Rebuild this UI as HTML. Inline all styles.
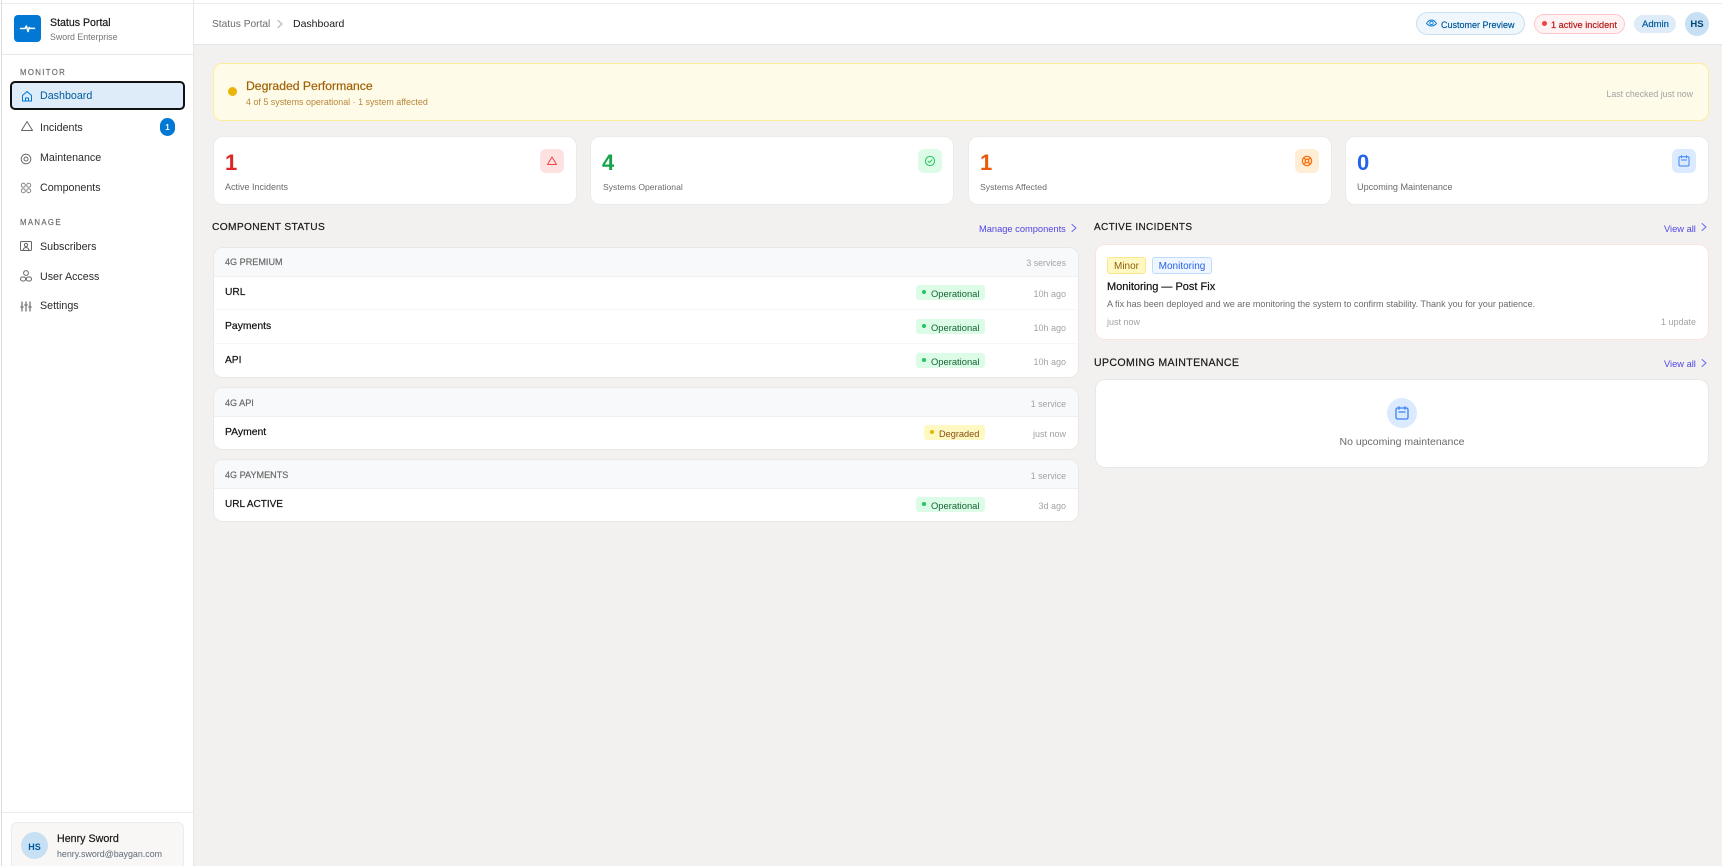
<!DOCTYPE html>
<html lang="en"><head><meta charset="utf-8"><title>Status Portal</title>
<style>
*{box-sizing:border-box;margin:0;padding:0}
html,body{width:1722px;height:866px;overflow:hidden;background:#f2f1ef;font-family:"Liberation Sans",Arial,sans-serif}
#p{position:relative;width:1722px;height:866px;overflow:hidden}
.b{position:absolute}
.t{position:absolute;line-height:0;height:0;white-space:nowrap;font-size:10.5px;color:#1f1f1f}
.r{transform:translateX(-100%)}
.c{transform:translateX(-50%)}
.m{-webkit-text-stroke:.2px currentColor}
.card{position:absolute;background:#fff;border:1px solid #ebebeb;border-radius:10px}
.ico{position:absolute;width:24px;height:24px;border-radius:6px;top:149px}
svg{position:absolute;fill:none;stroke-linecap:round;stroke-linejoin:round}
.g{position:absolute;left:212.5px;width:866px;background:#fff;border:1px solid #e8e8ea;border-radius:10px;overflow:hidden}
.gh{position:absolute;left:0;right:0;top:0;background:#f8f9fa;border-bottom:1px solid #f0f0f0}
.ln{position:absolute;left:213px;width:864px;height:1px;background:#f7f7f7}
.pill{position:absolute;height:15px;border-radius:3px}
.ok{background:#dcfce7;left:916px;width:69px}
.dot{position:absolute;border-radius:50%}
.okt{color:#166534;font-size:9.4px}
.tm{color:#a3a3a3;font-size:9px;left:1066px}
.ghl{color:#6b6b6b;font-size:9.1px;left:225px}
.nm{left:225px;font-size:10.2px;color:#111}
.lb{color:#6b6b6b;font-size:9px}
.nv{left:40px;font-size:10.7px;color:#2b2b2b}
.st{font-size:22px;font-weight:700}
.sec{font-size:10.2px;color:#1a1a1a;letter-spacing:.35px}
.lk{font-size:9.3px;color:#4f46e5}
</style></head><body><div id="p">

<!-- sidebar -->
<div class="b" style="left:0;top:0;width:194px;height:866px;background:#fff;border-right:1px solid #e8e8e8"></div>
<div class="b" style="left:194px;top:0;width:1528px;height:45px;background:#fff;border-bottom:1px solid #e6e6e6"></div>
<div class="b" style="left:1px;top:0;width:1px;height:866px;background:#dcdcdc"></div>
<div class="b" style="left:0;top:3px;width:1722px;height:1px;background:#ececec"></div>
<div class="b" style="left:2px;top:54px;width:191px;height:1px;background:#e8e8e8"></div>

<div class="b" style="left:14px;top:15px;width:27px;height:27px;background:#0078d4;border-radius:4px"></div>
<svg style="left:14px;top:15px" width="27" height="27" viewBox="0 0 27 27" stroke="#fff" stroke-width="1.5"><path d="M6.500 13.500h4.500l1.400-2.500 1.600 5.500 1.200-4 .8.900H20.500"/></svg>
<div class="t m" style="left:50px;top:23px;font-size:10.6px;color:#1a1a1a">Status Portal</div>
<div class="t" style="left:50px;top:37px;font-size:8.8px;color:#757575">Sword Enterprise</div>

<div class="t m" style="left:20px;top:73px;font-size:7.8px;letter-spacing:1.35px;color:#6f6f6f">MONITOR</div>
<div class="b" style="left:10px;top:81px;width:175px;height:29px;background:#deecf9;border:2px solid #111;border-radius:5px"></div>
<svg style="left:20px;top:89px" width="14" height="14" viewBox="0 0 14 14" stroke="#0078d4" stroke-width="1"><path d="M2.500 6.500 7 2.500l4.500 4v5.500h-9zM5.500 12V9h3v3"/></svg>
<div class="t nv" style="top:96px;color:#005a9e">Dashboard</div>

<svg style="left:20px;top:119px" width="14" height="14" viewBox="0 0 14 14" stroke="#666" stroke-width="1"><path d="M7 2.500 12.500 11.500H1.500z"/></svg>
<div class="t nv" style="top:128px">Incidents</div>
<div class="b" style="left:160px;top:118px;width:15px;height:18px;background:#0078d4;border-radius:8px"></div>
<div class="t c" style="left:167.500px;top:128px;font-size:8px;font-weight:700;color:#fff">1</div>

<svg style="left:19px;top:152px" width="14" height="14" viewBox="0 0 14 14" stroke="#666" stroke-width="1"><circle cx="7" cy="7" r="2"/><circle cx="7" cy="7" r="4.800" stroke-dasharray="2 .6"/></svg>
<div class="t nv" style="top:158px">Maintenance</div>

<svg style="left:19px;top:181px" width="14" height="14" viewBox="0 0 14 14" stroke="#888" stroke-width="1"><circle cx="4.300" cy="4.300" r="2"/><circle cx="9.700" cy="4.300" r="2"/><circle cx="4.300" cy="9.700" r="2"/><circle cx="9.700" cy="9.700" r="2"/></svg>
<div class="t nv" style="top:188px">Components</div>

<div class="t m" style="left:20px;top:223px;font-size:7.800px;letter-spacing:1.350px;color:#6f6f6f">MANAGE</div>

<svg style="left:19px;top:239px" width="14" height="14" viewBox="0 0 14 14" stroke="#666" stroke-width="1"><rect x="1.500" y="2.500" width="11" height="9" rx="1"/><circle cx="7" cy="6" r="1.600"/><path d="M4 11.500c.4-2 1.400-3 3-3s2.600 1 3 3"/></svg>
<div class="t nv" style="top:247px">Subscribers</div>

<svg style="left:19px;top:269px" width="14" height="14" viewBox="0 0 14 14" stroke="#666" stroke-width="1"><circle cx="7" cy="4" r="2.400"/><rect x="1.500" y="8" width="5.200" height="4" rx="2"/><rect x="7.300" y="8" width="5.200" height="4" rx="2"/></svg>
<div class="t nv" style="top:277px">User Access</div>

<svg style="left:19px;top:299px" width="14" height="14" viewBox="0 0 14 14" stroke="#777" stroke-width="1.300"><path d="M3 3v9M7 3v9M11 3v9M1.800 8h2.400M5.800 6h2.400M9.800 8h2.400"/></svg>
<div class="t nv" style="top:306px">Settings</div>

<div class="b" style="left:2px;top:812px;width:191px;height:1px;background:#ececec"></div>
<div class="b" style="left:11px;top:822px;width:173px;height:60px;background:#f8f7f5;border:1px solid #ececec;border-radius:6px"></div>
<div class="dot" style="left:21px;top:832px;width:27px;height:27px;background:#c7e0f4"></div>
<div class="t c" style="left:34.500px;top:847px;font-size:9px;font-weight:700;color:#005a9e">HS</div>
<div class="t m" style="left:57px;top:839px;font-size:10.700px;color:#1a1a1a">Henry Sword</div>
<div class="t" style="left:57px;top:854px;font-size:8.900px;color:#5f6b7a">henry.sword@baygan.com</div>

<!-- top bar -->
<div class="t" style="left:212px;top:25px;font-size:10.200px;color:#6b6b6b">Status Portal</div>
<svg style="left:275px;top:19px" width="10" height="10" viewBox="0 0 10 10" stroke="#aaa" stroke-width="1"><path d="M3 1.500 7 5 3 8.500"/></svg>
<div class="t" style="left:293px;top:24px;font-size:10.500px;color:#1a1a1a">Dashboard</div>

<div class="b" style="left:1416px;top:12px;width:109px;height:23px;background:#eff6fc;border:1px solid #c7e0f4;border-radius:12px"></div>
<svg style="left:1425px;top:17px" width="13" height="13" viewBox="0 0 13 13" stroke="#0078d4" stroke-width=".9"><path d="M1.500 6.500C3 4 4.600 3 6.500 3s3.500 1 5 3.500c-1.500 1.500-3 2.500-5 2.500s-3.500-1-5-2.500z"/><circle cx="6.500" cy="6" r="1.700"/></svg>
<div class="t m" style="left:1441px;top:25px;font-size:9px;color:#005a9e">Customer Preview</div>

<div class="b" style="left:1534px;top:14px;width:91px;height:20px;background:#fef2f2;border:1px solid #fecaca;border-radius:10px"></div>
<div class="dot" style="left:1542px;top:21px;width:5px;height:5px;background:#ef4444"></div>
<div class="t m" style="left:1551px;top:25px;font-size:9.200px;color:#b91c1c">1 active incident</div>

<div class="b" style="left:1634px;top:15px;width:42px;height:18px;background:#deecf9;border-radius:9px"></div>
<div class="t m" style="left:1642px;top:25px;font-size:9.500px;color:#005a9e">Admin</div>
<div class="dot" style="left:1685px;top:12px;width:24px;height:24px;background:#c7e0f4"></div>
<div class="t c" style="left:1697px;top:25px;font-size:9.500px;font-weight:700;color:#004578">HS</div>

<!-- banner -->
<div class="b" style="left:212.500px;top:63px;width:1496px;height:58px;background:#fefbe8;border:1px solid #fdee9b;border-radius:9px"></div>
<div class="dot" style="left:228px;top:87px;width:9px;height:9px;background:#eab308"></div>
<div class="t m" style="left:246px;top:86px;font-size:12.200px;color:#a16207">Degraded Performance</div>
<div class="t" style="left:246px;top:102px;font-size:8.930px;color:#b8863c">4 of 5 systems operational · 1 system affected</div>
<div class="t r" style="left:1693px;top:94px;font-size:8.800px;color:#a3a3a3">Last checked just now</div>

<!-- stats -->
<div class="card" style="left:212.500px;top:136px;width:364.500px;height:69px"></div>
<div class="card" style="left:589.500px;top:136px;width:364.500px;height:69px"></div>
<div class="card" style="left:967.500px;top:136px;width:364.500px;height:69px"></div>
<div class="card" style="left:1344.500px;top:136px;width:364px;height:69px"></div>
<div class="t st" style="left:225px;top:163px;color:#dc2626">1</div>
<div class="t st" style="left:602px;top:163px;color:#16a34a">4</div>
<div class="t st" style="left:980px;top:163px;color:#ea580c">1</div>
<div class="t st" style="left:1357px;top:163px;color:#2563eb">0</div>
<div class="t lb" style="left:225px;top:187px">Active Incidents</div>
<div class="t lb" style="left:603px;top:187px;font-size:8.600px">Systems Operational</div>
<div class="t lb" style="left:980px;top:187px;font-size:8.700px">Systems Affected</div>
<div class="t lb" style="left:1357px;top:187px;font-size:9.100px">Upcoming Maintenance</div>

<div class="ico" style="left:540px;background:#fee2e2"></div>
<svg style="left:545px;top:154px" width="14" height="14" viewBox="0 0 14 14" stroke="#ef4444" stroke-width="1"><path d="M7 3 11.500 10.500H2.500z"/></svg>
<div class="ico" style="left:918px;background:#dcfce7"></div>
<svg style="left:923px;top:154px" width="14" height="14" viewBox="0 0 14 14" stroke="#22c55e" stroke-width="1"><circle cx="7" cy="7" r="4.600"/><path d="M5 7.200 6.500 8.500 9 5.800"/></svg>
<div class="ico" style="left:1295px;background:#ffedd5"></div>
<svg style="left:1300px;top:154px" width="14" height="14" viewBox="0 0 14 14" stroke="#f97316" stroke-width="1.300"><circle cx="7" cy="7" r="4.600"/><circle cx="7" cy="7" r="1.800"/><path d="M3.800 3.800 5.700 5.700M10.200 3.800 8.300 5.700M3.800 10.200 5.700 8.300M10.200 10.200 8.300 8.300"/></svg>
<div class="ico" style="left:1672px;background:#dbeafe"></div>
<svg style="left:1677px;top:154px" width="14" height="14" viewBox="0 0 14 14" stroke="#3b82f6" stroke-width="1"><rect x="2" y="2.800" width="10" height="9.200" rx="1.200"/><path d="M4.500 1.800v2M9.500 1.800v2M4.500 6h5"/></svg>

<!-- section titles -->
<div class="t sec m" style="left:212px;top:228px">COMPONENT STATUS</div>
<div class="t lk" style="left:979px;top:229px">Manage components</div>
<svg style="left:1069px;top:223px" width="10" height="10" viewBox="0 0 10 10" stroke="#6366f1" stroke-width="1"><path d="M3 1.500 7 5 3 8.500"/></svg>
<div class="t sec m" style="left:1094px;top:228px;font-size:10px">ACTIVE INCIDENTS</div>
<div class="t lk" style="left:1664px;top:229px">View all</div>
<svg style="left:1699px;top:222px" width="10" height="10" viewBox="0 0 10 10" stroke="#6366f1" stroke-width="1"><path d="M3 1.500 7 5 3 8.500"/></svg>
<div class="t sec m" style="left:1094px;top:363px;font-size:10.600px">UPCOMING MAINTENANCE</div>
<div class="t lk" style="left:1664px;top:364px">View all</div>
<svg style="left:1699px;top:358px" width="10" height="10" viewBox="0 0 10 10" stroke="#6366f1" stroke-width="1"><path d="M3 1.500 7 5 3 8.500"/></svg>

<!-- groups -->
<div class="g" style="top:247px;height:131px"><div class="gh" style="height:29px"></div></div>
<div class="ln" style="top:309px"></div><div class="ln" style="top:343px"></div>
<div class="g" style="top:387px;height:63px"><div class="gh" style="height:29px"></div></div>
<div class="g" style="top:459px;height:63px"><div class="gh" style="height:29px"></div></div>

<div class="t ghl m" style="top:262px">4G PREMIUM</div><div class="t r tm" style="top:263px;font-size:8.800px">3 services</div>
<div class="t nm m" style="top:293px">URL</div>
<div class="t nm m" style="top:327px;font-size:10.400px">Payments</div>
<div class="t nm m" style="top:361px">API</div>
<div class="t ghl m" style="top:403px">4G API</div><div class="t r tm" style="top:404px;font-size:8.800px">1 service</div>
<div class="t nm m" style="top:433px;font-size:10.400px">PAyment</div>
<div class="t ghl m" style="top:475px">4G PAYMENTS</div><div class="t r tm" style="top:476px;font-size:8.800px">1 service</div>
<div class="t nm m" style="top:505px;font-size:10px">URL ACTIVE</div>

<div class="pill ok" style="top:285px"></div><div class="dot" style="left:922px;top:290px;width:4px;height:4px;background:#22c55e"></div><div class="t okt" style="left:931px;top:294px">Operational</div><div class="t r tm" style="top:294px">10h ago</div>
<div class="pill ok" style="top:319px"></div><div class="dot" style="left:922px;top:324px;width:4px;height:4px;background:#22c55e"></div><div class="t okt" style="left:931px;top:328px">Operational</div><div class="t r tm" style="top:328px">10h ago</div>
<div class="pill ok" style="top:353px"></div><div class="dot" style="left:922px;top:358px;width:4px;height:4px;background:#22c55e"></div><div class="t okt" style="left:931px;top:362px">Operational</div><div class="t r tm" style="top:362px">10h ago</div>
<div class="pill" style="top:425px;left:924px;width:61px;background:#fef9c3"></div><div class="dot" style="left:930px;top:430px;width:4px;height:4px;background:#eab308"></div><div class="t" style="left:939px;top:434px;font-size:9.200px;color:#854d0e">Degraded</div><div class="t r tm" style="top:434px">just now</div>
<div class="pill ok" style="top:497px"></div><div class="dot" style="left:922px;top:502px;width:4px;height:4px;background:#22c55e"></div><div class="t okt" style="left:931px;top:506px">Operational</div><div class="t r tm" style="top:506px">3d ago</div>

<!-- incident -->
<div class="card" style="left:1094.500px;top:244px;width:614px;height:96px;border-color:#fde2e2"></div>
<div class="b" style="left:1107px;top:257px;width:39px;height:17px;background:#fef9c3;border:1px solid #fde68a;border-radius:3px"></div>
<div class="t c" style="left:1126.500px;top:267px;font-size:10px;color:#92600e">Minor</div>
<div class="b" style="left:1152px;top:257px;width:60px;height:17px;background:#eff6ff;border:1px solid #bfdbfe;border-radius:3px"></div>
<div class="t c" style="left:1182px;top:267px;font-size:10px;color:#2563eb">Monitoring</div>
<div class="t m" style="left:1107px;top:287px;font-size:11px;color:#111">Monitoring — Post Fix</div>
<div class="t" style="left:1107px;top:304px;font-size:9.050px;color:#6b6b6b">A fix has been deployed and we are monitoring the system to confirm stability. Thank you for your patience.</div>
<div class="t" style="left:1107px;top:322px;font-size:9px;color:#a3a3a3">just now</div>
<div class="t r" style="left:1696px;top:322px;font-size:9px;color:#a3a3a3">1 update</div>

<!-- maintenance -->
<div class="card" style="left:1094.500px;top:379px;width:614px;height:89px;border-color:#e8e8ea"></div>
<div class="dot" style="left:1387px;top:398px;width:30px;height:30px;background:#dbeafe"></div>
<svg style="left:1393px;top:404px" width="18" height="18" viewBox="0 0 18 18" stroke="#3b82f6" stroke-width="1.300"><rect x="3" y="4" width="12" height="11" rx="1.500"/><path d="M6 2.800v2.400M12 2.800v2.400M6 8h6"/></svg>
<div class="t c" style="left:1402px;top:442px;font-size:10.500px;color:#6b6b6b">No upcoming maintenance</div>

</div></body></html>
